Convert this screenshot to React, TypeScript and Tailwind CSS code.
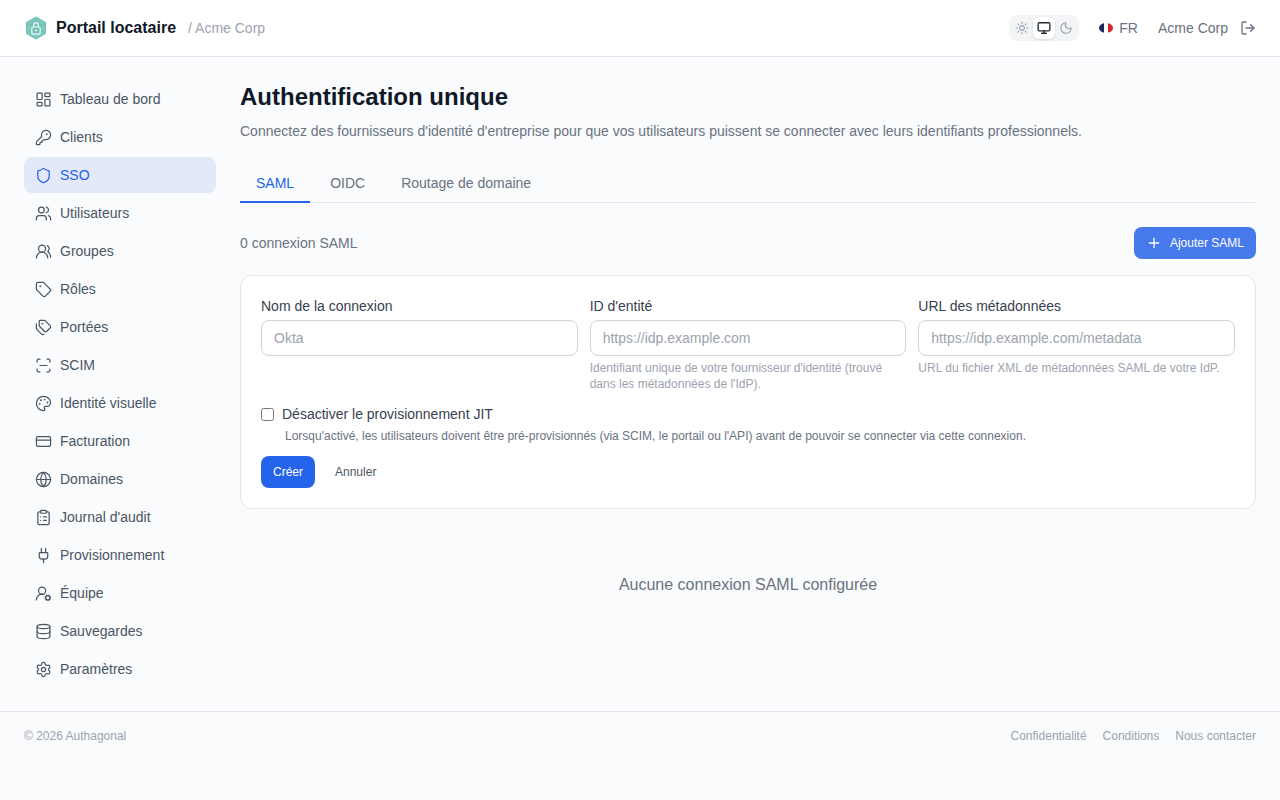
import React from "react";
import {
  LayoutDashboard, KeyRound, Shield, Users, UsersRound, Tag, Tags, ScanLine, Palette, CreditCard, Globe,
  ClipboardList, Plug, UserRoundCog, Database, Settings, Sun, Monitor, Moon, LogOut, Plus,
} from "lucide-react";

const nav = [
  ["Tableau de bord", LayoutDashboard],
  ["Clients", KeyRound],
  ["SSO", Shield],
  ["Utilisateurs", Users],
  ["Groupes", UsersRound],
  ["Rôles", Tag],
  ["Portées", Tags],
  ["SCIM", ScanLine],
  ["Identité visuelle", Palette],
  ["Facturation", CreditCard],
  ["Domaines", Globe],
  ["Journal d'audit", ClipboardList],
  ["Provisionnement", Plug],
  ["Équipe", UserRoundCog],
  ["Sauvegardes", Database],
  ["Paramètres", Settings],
] as const;

function Logo() {
  return (
    <svg width="24" height="24" viewBox="0 0 24 24" className="shrink-0">
      <path d="M12 0.6 22 6.3V17.7L12 23.4 2 17.7V6.3Z" fill="#74c2b6" />
      <path d="M12 3.2 19.8 7.6V16.4L12 20.8 4.2 16.4V7.6Z" fill="none" stroke="#93d2c8" strokeWidth="0.7" />
      <rect x="7.8" y="11" width="8.4" height="7.2" rx="1.6" fill="none" stroke="#eef9f7" strokeWidth="1.2" />
      <path d="M9.7 11V9a2.3 2.3 0 0 1 4.6 0v2" fill="none" stroke="#eef9f7" strokeWidth="1.2" />
      <circle cx="12" cy="14.6" r="1" fill="#eef9f7" />
      <circle cx="5.8" cy="12" r="0.5" fill="#d5f0eb" />
      <circle cx="18.2" cy="12" r="0.5" fill="#d5f0eb" />
    </svg>
  );
}

function Field({ label, placeholder, help, className }: { label: string; placeholder: string; help?: React.ReactNode; className?: string }) {
  return (
    <div className={className}>
      <label className="block text-sm leading-5 font-normal text-[#374151] mb-1">{label}</label>
      <input
        placeholder={placeholder}
        className="block w-full h-9 rounded-lg border border-[#d1d5db] bg-white px-3 text-sm text-[#111827] placeholder:text-[#9ca3af] outline-none"
      />
      {help && <p className="mt-1 text-xs leading-4 text-[#9ca3af]">{help}</p>}
    </div>
  );
}

export default function App() {
  return (
    <div className="min-h-[800px] bg-[#f9fbfd] font-['Liberation_Sans',Arial,sans-serif] flex flex-col">
      <header className="h-[57px] shrink-0 bg-white border-b border-[#e5e7eb] flex items-center justify-between px-6">
        <div className="flex items-center">
          <Logo />
          <span className="ml-2 text-base font-bold text-[#111827]">Portail locataire</span>
          <span className="ml-3 text-sm text-[#9ca3af]">/ Acme Corp</span>
        </div>
        <div className="flex items-center">
          <div className="flex items-center rounded-lg bg-[#f3f4f6] p-0.5 h-[26px]">
            <span className="w-[22px] h-[22px] flex items-center justify-center text-[#9ca3af]"><Sun size={14} /></span>
            <span className="w-[22px] h-[22px] flex items-center justify-center rounded-md bg-white text-[#1f2937] shadow-sm"><Monitor size={14} strokeWidth={2.25} /></span>
            <span className="w-[22px] h-[22px] flex items-center justify-center text-[#9ca3af]"><Moon size={14} /></span>
          </div>
          <span className="ml-5 flex items-center text-sm text-[#6b7280]">
            <svg width="14" height="14" viewBox="0 0 14 14" className="mr-1.5">
              <defs><clipPath id="flagclip"><ellipse cx="7" cy="7" rx="7" ry="5" /></clipPath></defs>
              <g clipPath="url(#flagclip)">
                <rect x="0" y="0" width="5" height="14" fill="#1e2a5e" />
                <rect x="5" y="0" width="4" height="14" fill="#ffffff" />
                <rect x="9" y="0" width="5" height="14" fill="#d8232f" />
              </g>
            </svg>
            FR
          </span>
          <span className="ml-5 text-sm text-[#6b7280]">Acme Corp</span>
          <LogOut size={16} className="ml-3 text-[#6b7280]" />
        </div>
      </header>

      <div className="flex flex-1">
        <aside className="w-[216px] shrink-0 pl-6 pt-6 pb-6">
          <nav className="flex flex-col gap-0.5">
            {nav.map(([label, Icon]) => {
              const active = label === "SSO";
              return (
                <a
                  key={label}
                  className={
                    "h-9 flex items-center gap-[7px] px-3 rounded-lg text-sm " +
                    (active ? "bg-[#e3e9f9] text-[#2563eb]" : "text-[#4b5563]")
                  }
                >
                  <Icon size={17} strokeWidth={1.75} className="shrink-0 -ml-px mr-px" />
                  {label}
                </a>
              );
            })}
          </nav>
        </aside>

        <main className="flex-1 pl-6 pr-6 pt-6 min-w-0">
          <h1 className="text-2xl leading-8 font-bold text-[#111827]">Authentification unique</h1>
          <p className="mt-2 text-sm leading-5 text-[#6b7280]">
            Connectez des fournisseurs d'identité d'entreprise pour que vos utilisateurs puissent se connecter avec leurs identifiants professionnels.
          </p>

          <div className="mt-6 flex border-b border-[#e5e7eb] h-[38px] text-sm">
            <span className="px-4 flex items-center text-[#2563eb] border-b-2 border-[#2563eb] h-[38px]">SAML</span>
            <span className="ml-1 px-4 pb-[2px] flex items-center text-[#6b7280] h-[38px]">OIDC</span>
            <span className="ml-1 px-4 pb-[2px] flex items-center text-[#6b7280] h-[38px]">Routage de domaine</span>
          </div>

          <div className="mt-6 flex items-center justify-between h-8">
            <span className="text-sm text-[#6b7280]">0 connexion SAML</span>
            <button className="h-8 flex items-center gap-2 rounded-lg bg-[#4679ec] px-3 text-xs text-white">
              <Plus size={16} />
              Ajouter SAML
            </button>
          </div>

          <section className="mt-4 rounded-xl border border-[#e5e7eb] bg-white p-5">
            <div className="grid grid-cols-3 gap-3">
              <Field label="Nom de la connexion" placeholder="Okta" />
              <Field
                label="ID d'entité"
                placeholder="https://idp.example.com"
                help="Identifiant unique de votre fournisseur d'identité (trouvé dans les métadonnées de l'IdP)."
              />
              <Field
                label="URL des métadonnées"
                placeholder="https://idp.example.com/metadata"
                help="URL du fichier XML de métadonnées SAML de votre IdP."
              />
            </div>
            <label className="mt-3 flex items-center gap-2 text-sm leading-5 text-[#374151]">
              <input type="checkbox" className="w-[13px] h-[13px]" />
              Désactiver le provisionnement JIT
            </label>
            <p className="mt-1 ml-6 text-xs leading-4 text-[#6b7280]">
              Lorsqu'activé, les utilisateurs doivent être pré-provisionnés (via SCIM, le portail ou l'API) avant de pouvoir se connecter via cette connexion.
            </p>
            <div className="mt-3 flex items-center gap-2">
              <button className="h-8 px-3 rounded-lg bg-[#2563eb] text-xs text-white">Créer</button>
              <button className="h-8 px-3 rounded-lg text-xs text-[#4b5563]">Annuler</button>
            </div>
          </section>

          <div className="mt-[64px] text-center text-base leading-6 text-[#6b7280]">Aucune connexion SAML configurée</div>
        </main>
      </div>

      <footer className="h-[89px] shrink-0 border-t border-[#e5e7eb] px-6 pt-4 flex items-start justify-between text-xs leading-4 text-[#9ca3af]">
        <span>© 2026 Authagonal</span>
        <div className="flex gap-4">
          <span>Confidentialité</span>
          <span>Conditions</span>
          <span>Nous contacter</span>
        </div>
      </footer>
    </div>
  );
}
